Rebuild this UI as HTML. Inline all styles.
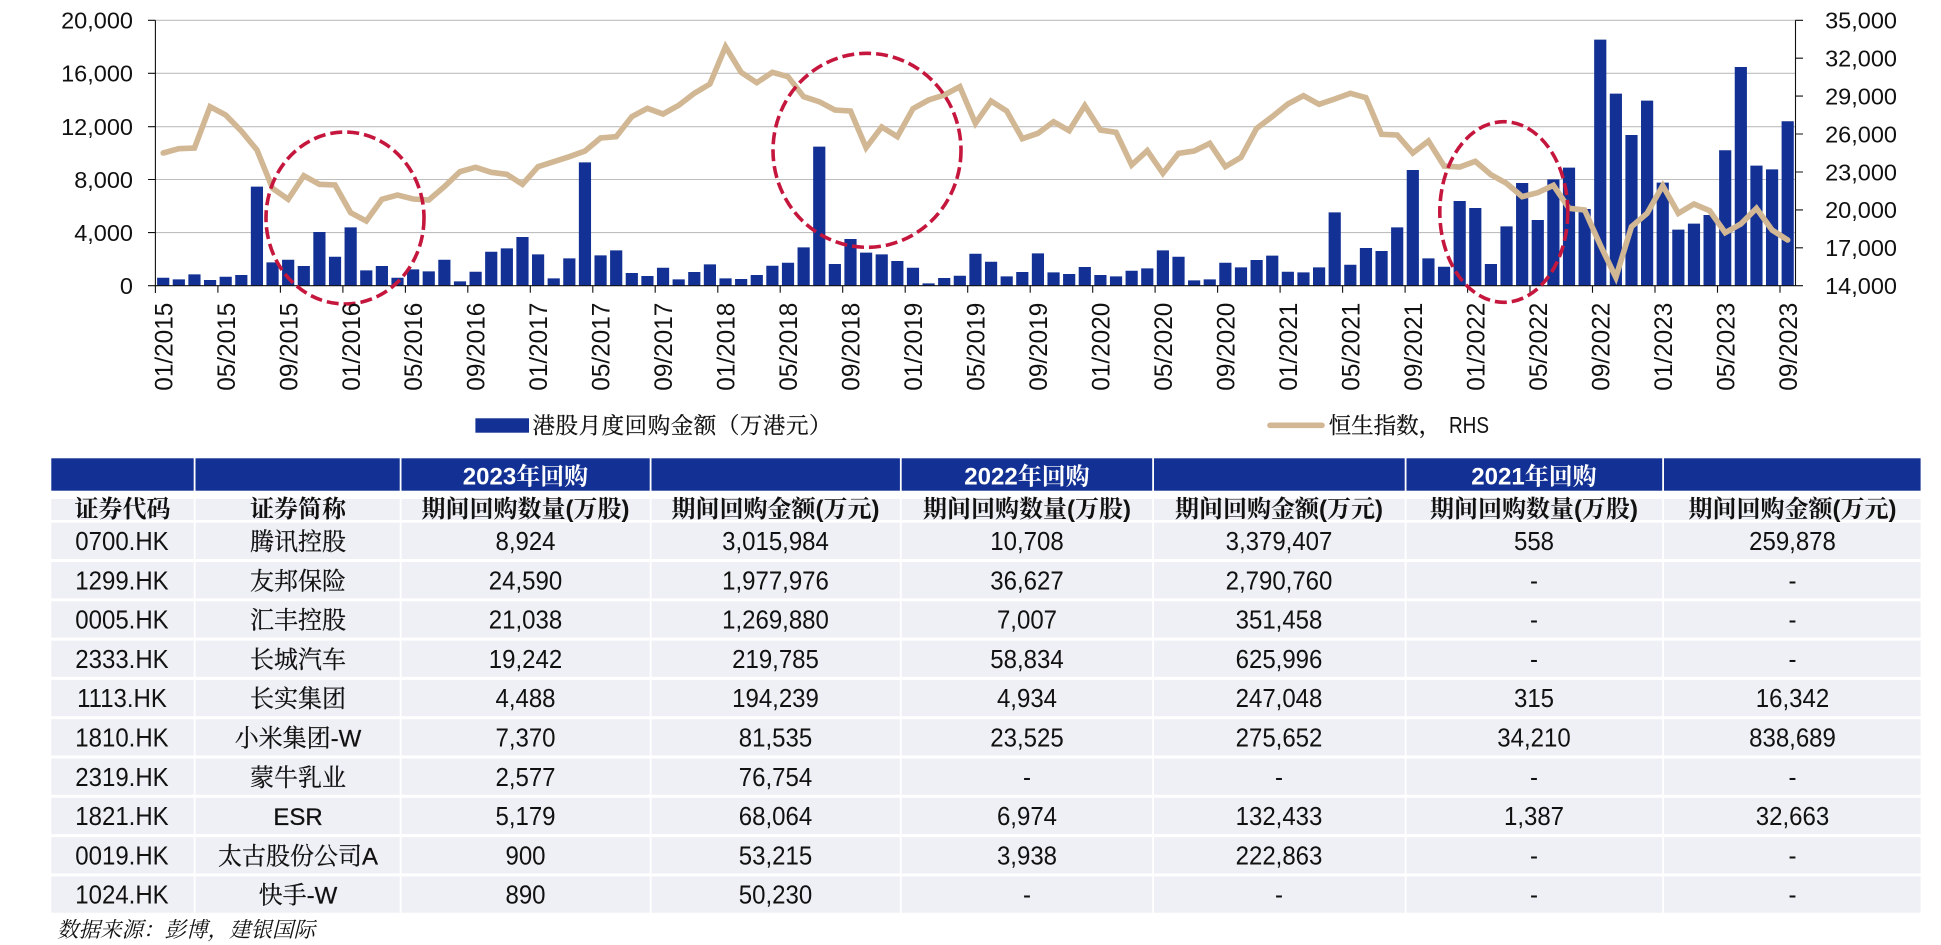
<!DOCTYPE html>
<html lang="zh-CN"><head><meta charset="utf-8"><title>港股月度回购金额</title>
<style>
html,body{margin:0;padding:0;background:#fff}
svg{display:block}
text{font-family:"Liberation Sans","Noto Serif CJK SC",serif;fill:#111}
.a{font-size:23.5px;text-anchor:end}
.x{font-size:25px;text-anchor:start}
.c{font-size:24px;text-anchor:middle}
.c2{transform:scale(1,.95);stroke:#111;stroke-width:.25px}
.b{font-size:24px;text-anchor:middle;font-weight:700}
.h{font-size:24px;text-anchor:middle;font-weight:700;fill:#fff}
.l{font-size:22.5px;stroke:#111;stroke-width:.25px}
</style></head><body>
<svg width="1941" height="945" viewBox="0 0 1941 945" xmlns="http://www.w3.org/2000/svg">
<rect width="1941" height="945" fill="#fff"/>
<!-- grid -->
<g stroke="#BEBEBE" stroke-width="1.1">
<path d="M155.4 20.3H1795.5M155.4 73.3H1795.5M155.4 126.7H1795.5M155.4 179.5H1795.5M155.4 232.6H1795.5"/>
</g>
<!-- bars -->
<path transform="translate(155.4,285.7) scale(15.62,-0.01327)" fill="#133194" d="M.11 0V603h.78V0m.22 0V477h.78V0m.22 0V854h.78V0m.22 0V427h.78V0m.22 0V678h.78V0m.22 0V804h.78V0m.22 0V7464h.78V0m.22 0V1759h.78V0m.22 0V1960h.78V0m.22 0V1482h.78V0m.22 0V4045h.78V0m.22 0V2186h.78V0m.22 0V4398h.78V0m.22 0V1156h.78V0m.22 0V1482h.78V0m.22 0V603h.78V0m.22 0V1231h.78V0m.22 0V1080h.78V0m.22 0V1960h.78V0m.22 0V327h.78V0m.22 0V1055h.78V0m.22 0V2563h.78V0m.22 0V2814h.78V0m.22 0V3669h.78V0m.22 0V2362h.78V0m.22 0V553h.78V0m.22 0V2060h.78V0m.22 0V9298h.78V0m.22 0V2287h.78V0m.22 0V2664h.78V0m.22 0V955h.78V0m.22 0V729h.78V0m.22 0V1357h.78V0m.22 0V477h.78V0m.22 0V1030h.78V0m.22 0V1608h.78V0m.22 0V553h.78V0m.22 0V503h.78V0m.22 0V804h.78V0m.22 0V1508h.78V0m.22 0V1734h.78V0m.22 0V2890h.78V0m.22 0V10480h.78V0m.22 0V1633h.78V0m.22 0V3518h.78V0m.22 0V2488h.78V0m.22 0V2362h.78V0m.22 0V1860h.78V0m.22 0V1357h.78V0m.22 0V176h.78V0m.22 0V578h.78V0m.22 0V754h.78V0m.22 0V2412h.78V0m.22 0V1809h.78V0m.22 0V704h.78V0m.22 0V1030h.78V0m.22 0V2437h.78V0m.22 0V1005h.78V0m.22 0V880h.78V0m.22 0V1407h.78V0m.22 0V804h.78V0m.22 0V704h.78V0m.22 0V1131h.78V0m.22 0V1307h.78V0m.22 0V2664h.78V0m.22 0V2186h.78V0m.22 0V402h.78V0m.22 0V477h.78V0m.22 0V1734h.78V0m.22 0V1382h.78V0m.22 0V1935h.78V0m.22 0V2262h.78V0m.22 0V1055h.78V0m.22 0V1005h.78V0m.22 0V1382h.78V0m.22 0V5529h.78V0m.22 0V1583h.78V0m.22 0V2840h.78V0m.22 0V2614h.78V0m.22 0V4398h.78V0m.22 0V8720h.78V0m.22 0V2060h.78V0m.22 0V1432h.78V0m.22 0V6383h.78V0m.22 0V5855h.78V0m.22 0V1633h.78V0m.22 0V4473h.78V0m.22 0V7740h.78V0m.22 0V4951h.78V0m.22 0V8017h.78V0m.22 0V8896h.78V0m.22 0V5780h.78V0m.22 0V18546h.78V0m.22 0V14475h.78V0m.22 0V11359h.78V0m.22 0V13947h.78V0m.22 0V7765h.78V0m.22 0V4222h.78V0m.22 0V4674h.78V0m.22 0V5328h.78V0m.22 0V10203h.78V0m.22 0V16485h.78V0m.22 0V9047h.78V0m.22 0V8770h.78V0m.22 0V12389h.78V0"/>
<!-- axes -->
<g stroke="#111" stroke-width="1.1" fill="none">
<path d="M155.4 20.3V293M148 20.3h7.4M148 73.3h7.4M148 126.7h7.4M148 179.5h7.4M148 232.6h7.4M148 285.7H1803"/>
<path d="M1795.5 20.3V285.7M1795.5 20.3h7.5M1795.5 58.2h7.5M1795.5 96.1h7.5M1795.5 134h7.5M1795.5 172h7.5M1795.5 209.9h7.5M1795.5 247.8h7.5"/>
<path d="M217.9 285.7v7M280.4 285.7v7M342.9 285.7v7M405.4 285.7v7M467.8 285.7v7M530.3 285.7v7M592.8 285.7v7M655.2 285.7v7M717.8 285.7v7M780.2 285.7v7M842.7 285.7v7M905.2 285.7v7M967.7 285.7v7M1030.2 285.7v7M1092.7 285.7v7M1155.1 285.7v7M1217.6 285.7v7M1280.1 285.7v7M1342.6 285.7v7M1405.1 285.7v7M1467.6 285.7v7M1530 285.7v7M1592.5 285.7v7M1655 285.7v7M1717.5 285.7v7M1780 285.7v7"/>
</g>
<!-- index line -->
<polyline transform="translate(155.4,0) scale(15.62,.33333)" fill="none" stroke="#D1B793" stroke-width="5.6" stroke-linejoin="miter" stroke-linecap="round" vector-effect="non-scaling-stroke" points="0.5,459 1.5,446 2.5,444 3.5,320 4.5,345 5.5,393 6.5,450 7.5,565 8.5,598 9.5,527 10.5,553 11.5,555 12.5,638 13.5,663 14.5,598 15.5,585 16.5,597 17.5,600 18.5,560 19.5,515 20.5,502 21.5,517 22.5,523 23.5,553 24.5,500 25.5,485 26.5,470 27.5,453 28.5,414 29.5,410 30.5,350 31.5,325 32.5,342 33.5,316 34.5,280 35.5,252 36.5,140 37.5,217 38.5,248 39.5,217 40.5,230 41.5,290 42.5,305 43.5,330 44.5,333 45.5,443 46.5,381 47.5,410 48.5,326 49.5,300 50.5,285 51.5,260 52.5,370 53.5,303 54.5,333 55.5,416 56.5,400 57.5,365 58.5,392 59.5,317 60.5,390 61.5,397 62.5,495 63.5,452 64.5,520 65.5,460 66.5,453 67.5,430 68.5,500 69.5,472 70.5,385 71.5,350 72.5,312 73.5,287 74.5,313 75.5,297 76.5,280 77.5,293 78.5,403 79.5,405 80.5,459 81.5,423 82.5,498 83.5,501 84.5,484 85.5,524 86.5,550 87.5,590 88.5,578 89.5,556 90.5,625 91.5,630 92.5,735 93.5,832 94.5,680 95.5,640 96.5,557 97.5,640 98.5,612 99.5,632 100.5,698 101.5,672 102.5,625 103.5,690 104.5,720"/>
<!-- ellipses -->
<g fill="none" stroke="#C5173D" stroke-width="3.6" stroke-dasharray="12 5">
<ellipse cx="345" cy="218" rx="79" ry="86"/>
<ellipse cx="867" cy="150.3" rx="94" ry="97"/>
<ellipse cx="1503.8" cy="212" rx="64" ry="90.3"/>
</g>
<!-- left labels -->
<g class="lab">
<text class="a" x="133" y="28.5">20,000</text>
<text class="a" x="133" y="81.5">16,000</text>
<text class="a" x="133" y="135">12,000</text>
<text class="a" x="133" y="188">8,000</text>
<text class="a" x="133" y="241">4,000</text>
<text class="a" x="133" y="294">0</text>
<text class="a" x="1897" y="28.5">35,000</text>
<text class="a" x="1897" y="66.5">32,000</text>
<text class="a" x="1897" y="104.5">29,000</text>
<text class="a" x="1897" y="142.5">26,000</text>
<text class="a" x="1897" y="180.5">23,000</text>
<text class="a" x="1897" y="218">20,000</text>
<text class="a" x="1897" y="256">17,000</text>
<text class="a" x="1897" y="294">14,000</text>
</g>
<!-- x labels -->
<g>
<text class="x" textLength="88" lengthAdjust="spacingAndGlyphs" transform="translate(172.3,390.7) rotate(-90)">01/2015</text>
<text class="x" textLength="88" lengthAdjust="spacingAndGlyphs" transform="translate(234.8,390.7) rotate(-90)">05/2015</text>
<text class="x" textLength="88" lengthAdjust="spacingAndGlyphs" transform="translate(297.3,390.7) rotate(-90)">09/2015</text>
<text class="x" textLength="88" lengthAdjust="spacingAndGlyphs" transform="translate(359.8,390.7) rotate(-90)">01/2016</text>
<text class="x" textLength="88" lengthAdjust="spacingAndGlyphs" transform="translate(422.2,390.7) rotate(-90)">05/2016</text>
<text class="x" textLength="88" lengthAdjust="spacingAndGlyphs" transform="translate(484.7,390.7) rotate(-90)">09/2016</text>
<text class="x" textLength="88" lengthAdjust="spacingAndGlyphs" transform="translate(547.2,390.7) rotate(-90)">01/2017</text>
<text class="x" textLength="88" lengthAdjust="spacingAndGlyphs" transform="translate(609.7,390.7) rotate(-90)">05/2017</text>
<text class="x" textLength="88" lengthAdjust="spacingAndGlyphs" transform="translate(672.1,390.7) rotate(-90)">09/2017</text>
<text class="x" textLength="88" lengthAdjust="spacingAndGlyphs" transform="translate(734.6,390.7) rotate(-90)">01/2018</text>
<text class="x" textLength="88" lengthAdjust="spacingAndGlyphs" transform="translate(797.1,390.7) rotate(-90)">05/2018</text>
<text class="x" textLength="88" lengthAdjust="spacingAndGlyphs" transform="translate(859.6,390.7) rotate(-90)">09/2018</text>
<text class="x" textLength="88" lengthAdjust="spacingAndGlyphs" transform="translate(922.1,390.7) rotate(-90)">01/2019</text>
<text class="x" textLength="88" lengthAdjust="spacingAndGlyphs" transform="translate(984.6,390.7) rotate(-90)">05/2019</text>
<text class="x" textLength="88" lengthAdjust="spacingAndGlyphs" transform="translate(1047.1,390.7) rotate(-90)">09/2019</text>
<text class="x" textLength="88" lengthAdjust="spacingAndGlyphs" transform="translate(1109.5,390.7) rotate(-90)">01/2020</text>
<text class="x" textLength="88" lengthAdjust="spacingAndGlyphs" transform="translate(1172,390.7) rotate(-90)">05/2020</text>
<text class="x" textLength="88" lengthAdjust="spacingAndGlyphs" transform="translate(1234.5,390.7) rotate(-90)">09/2020</text>
<text class="x" textLength="88" lengthAdjust="spacingAndGlyphs" transform="translate(1297,390.7) rotate(-90)">01/2021</text>
<text class="x" textLength="88" lengthAdjust="spacingAndGlyphs" transform="translate(1359.5,390.7) rotate(-90)">05/2021</text>
<text class="x" textLength="88" lengthAdjust="spacingAndGlyphs" transform="translate(1422,390.7) rotate(-90)">09/2021</text>
<text class="x" textLength="88" lengthAdjust="spacingAndGlyphs" transform="translate(1484.4,390.7) rotate(-90)">01/2022</text>
<text class="x" textLength="88" lengthAdjust="spacingAndGlyphs" transform="translate(1546.9,390.7) rotate(-90)">05/2022</text>
<text class="x" textLength="88" lengthAdjust="spacingAndGlyphs" transform="translate(1609.4,390.7) rotate(-90)">09/2022</text>
<text class="x" textLength="88" lengthAdjust="spacingAndGlyphs" transform="translate(1671.9,390.7) rotate(-90)">01/2023</text>
<text class="x" textLength="88" lengthAdjust="spacingAndGlyphs" transform="translate(1734.4,390.7) rotate(-90)">05/2023</text>
<text class="x" textLength="88" lengthAdjust="spacingAndGlyphs" transform="translate(1796.9,390.7) rotate(-90)">09/2023</text>
</g>
<!-- legend -->
<rect x="475.4" y="418.3" width="53.6" height="14.4" fill="#133194"/>
<text class="l" x="532.5" y="433.5" textLength="299" lengthAdjust="spacing">港股月度回购金额（万港元）</text>
<path d="M1270 425.3H1322" stroke="#D1B793" stroke-width="5.6" stroke-linecap="round"/>
<text class="l" x="1328.6" y="433.5">恒生指数，</text>
<text x="1449" y="433" font-size="23" textLength="40" lengthAdjust="spacingAndGlyphs">RHS</text>

<!-- table backgrounds -->
<g fill="#133194">
<rect x="51.3" y="458.3" width="142.4" height="32.4"/>
<rect x="195.5" y="458.3" width="204.2" height="32.4"/>
<rect x="401.5" y="458.3" width="248.2" height="32.4"/>
<rect x="651.5" y="458.3" width="248.4" height="32.4"/>
<rect x="901.7" y="458.3" width="250.5" height="32.4"/>
<rect x="1154" y="458.3" width="250.7" height="32.4"/>
<rect x="1406.5" y="458.3" width="255.7" height="32.4"/>
<rect x="1664" y="458.3" width="256.6" height="32.4"/>
</g>
<defs>
<g id="r" fill="#EEF0F5">
<rect x="51.3" width="142.4" height="36.3"/>
<rect x="195.5" width="204.2" height="36.3"/>
<rect x="401.5" width="248.2" height="36.3"/>
<rect x="651.5" width="248.4" height="36.3"/>
<rect x="901.7" width="250.5" height="36.3"/>
<rect x="1154" width="250.7" height="36.3"/>
<rect x="1406.5" width="255.7" height="36.3"/>
<rect x="1664" width="256.6" height="36.3"/>
</g>
<g id="s" fill="#EEF0F5">
<rect x="51.3" width="142.4" height="21"/>
<rect x="195.5" width="204.2" height="21"/>
<rect x="401.5" width="248.2" height="21"/>
<rect x="651.5" width="248.4" height="21"/>
<rect x="901.7" width="250.5" height="21"/>
<rect x="1154" width="250.7" height="21"/>
<rect x="1406.5" width="255.7" height="21"/>
<rect x="1664" width="256.6" height="21"/>
</g>
</defs>
<use href="#s" y="499"/>
<use href="#r" y="522.7"/>
<use href="#r" y="562"/>
<use href="#r" y="601.3"/>
<use href="#r" y="640.6"/>
<use href="#r" y="679.9"/>
<use href="#r" y="719.2"/>
<use href="#r" y="758.5"/>
<use href="#r" y="797.8"/>
<use href="#r" y="837.1"/>
<use href="#r" y="876.4"/>

<!-- header -->
<text class="h" x="525.5" y="484.5">2023年回购</text>
<text class="h" x="1027" y="484.5">2022年回购</text>
<text class="h" x="1534" y="484.5">2021年回购</text>
<text class="b" x="122.5" y="517">证券代码</text>
<text class="b" x="298" y="517">证券简称</text>
<text class="b" x="525.5" y="517">期间回购数量(万股)</text>
<text class="b" x="775.5" y="517">期间回购金额(万元)</text>
<text class="b" x="1027" y="517">期间回购数量(万股)</text>
<text class="b" x="1279" y="517">期间回购金额(万元)</text>
<text class="b" x="1534" y="517">期间回购数量(万股)</text>
<text class="b" x="1792.5" y="517">期间回购金额(万元)</text>

<!-- rows -->
<g transform="translate(0,550) scale(1,1.07)"><text class="c" x="122">0700.HK</text><text class="c c2" x="298">腾讯控股</text><text class="c" x="525.5">8,924</text><text class="c" x="775.5">3,015,984</text><text class="c" x="1027">10,708</text><text class="c" x="1279">3,379,407</text><text class="c" x="1534">558</text><text class="c" x="1792.5">259,878</text></g>
<g transform="translate(0,589.3) scale(1,1.07)"><text class="c" x="122">1299.HK</text><text class="c c2" x="298">友邦保险</text><text class="c" x="525.5">24,590</text><text class="c" x="775.5">1,977,976</text><text class="c" x="1027">36,627</text><text class="c" x="1279">2,790,760</text><text class="c" x="1534">-</text><text class="c" x="1792.5">-</text></g>
<g transform="translate(0,628.6) scale(1,1.07)"><text class="c" x="122">0005.HK</text><text class="c c2" x="298">汇丰控股</text><text class="c" x="525.5">21,038</text><text class="c" x="775.5">1,269,880</text><text class="c" x="1027">7,007</text><text class="c" x="1279">351,458</text><text class="c" x="1534">-</text><text class="c" x="1792.5">-</text></g>
<g transform="translate(0,667.9) scale(1,1.07)"><text class="c" x="122">2333.HK</text><text class="c c2" x="298">长城汽车</text><text class="c" x="525.5">19,242</text><text class="c" x="775.5">219,785</text><text class="c" x="1027">58,834</text><text class="c" x="1279">625,996</text><text class="c" x="1534">-</text><text class="c" x="1792.5">-</text></g>
<g transform="translate(0,707.2) scale(1,1.07)"><text class="c" x="122">1113.HK</text><text class="c c2" x="298">长实集团</text><text class="c" x="525.5">4,488</text><text class="c" x="775.5">194,239</text><text class="c" x="1027">4,934</text><text class="c" x="1279">247,048</text><text class="c" x="1534">315</text><text class="c" x="1792.5">16,342</text></g>
<g transform="translate(0,746.5) scale(1,1.07)"><text class="c" x="122">1810.HK</text><text class="c c2" x="298">小米集团-W</text><text class="c" x="525.5">7,370</text><text class="c" x="775.5">81,535</text><text class="c" x="1027">23,525</text><text class="c" x="1279">275,652</text><text class="c" x="1534">34,210</text><text class="c" x="1792.5">838,689</text></g>
<g transform="translate(0,785.8) scale(1,1.07)"><text class="c" x="122">2319.HK</text><text class="c c2" x="298">蒙牛乳业</text><text class="c" x="525.5">2,577</text><text class="c" x="775.5">76,754</text><text class="c" x="1027">-</text><text class="c" x="1279">-</text><text class="c" x="1534">-</text><text class="c" x="1792.5">-</text></g>
<g transform="translate(0,825.1) scale(1,1.07)"><text class="c" x="122">1821.HK</text><text class="c c2" x="298">ESR</text><text class="c" x="525.5">5,179</text><text class="c" x="775.5">68,064</text><text class="c" x="1027">6,974</text><text class="c" x="1279">132,433</text><text class="c" x="1534">1,387</text><text class="c" x="1792.5">32,663</text></g>
<g transform="translate(0,864.4) scale(1,1.07)"><text class="c" x="122">0019.HK</text><text class="c c2" x="298">太古股份公司A</text><text class="c" x="525.5">900</text><text class="c" x="775.5">53,215</text><text class="c" x="1027">3,938</text><text class="c" x="1279">222,863</text><text class="c" x="1534">-</text><text class="c" x="1792.5">-</text></g>
<g transform="translate(0,903.7) scale(1,1.07)"><text class="c" x="122">1024.HK</text><text class="c c2" x="298">快手-W</text><text class="c" x="525.5">890</text><text class="c" x="775.5">50,230</text><text class="c" x="1027">-</text><text class="c" x="1279">-</text><text class="c" x="1534">-</text><text class="c" x="1792.5">-</text></g>

<text x="57" y="937" font-size="21.5" font-style="italic">数据来源：彭博，建银国际</text>
</svg>
</body></html>
